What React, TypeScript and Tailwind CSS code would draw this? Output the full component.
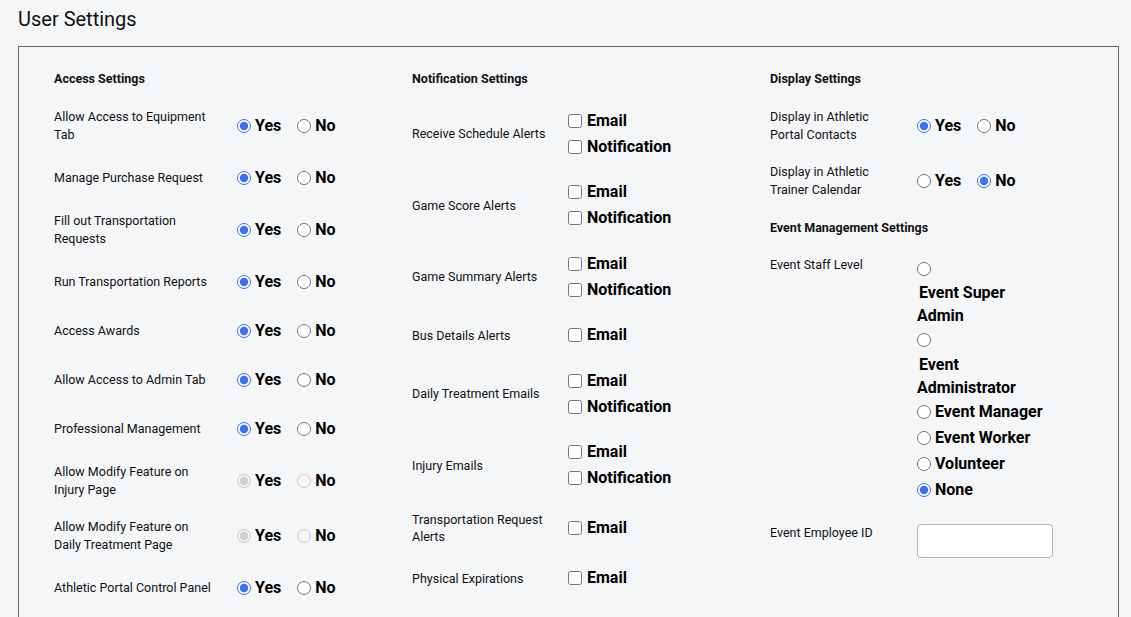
import React from 'react';

type YesNoRow = {
  label: string[];
  value: 'yes' | 'no';
  disabled?: boolean;
};

type AlertRow = {
  label: string[];
  options: string[];
};

const accessRows: YesNoRow[] = [
  { label: ['Allow Access to Equipment', 'Tab'], value: 'yes' },
  { label: ['Manage Purchase Request'], value: 'yes' },
  { label: ['Fill out Transportation', 'Requests'], value: 'yes' },
  { label: ['Run Transportation Reports'], value: 'yes' },
  { label: ['Access Awards'], value: 'yes' },
  { label: ['Allow Access to Admin Tab'], value: 'yes' },
  { label: ['Professional Management'], value: 'yes' },
  { label: ['Allow Modify Feature on', 'Injury Page'], value: 'yes', disabled: true },
  { label: ['Allow Modify Feature on', 'Daily Treatment Page'], value: 'yes', disabled: true },
  { label: ['Athletic Portal Control Panel'], value: 'yes' },
];

const alertRows: AlertRow[] = [
  { label: ['Receive Schedule Alerts'], options: ['Email', 'Notification'] },
  { label: ['Game Score Alerts'], options: ['Email', 'Notification'] },
  { label: ['Game Summary Alerts'], options: ['Email', 'Notification'] },
  { label: ['Bus Details Alerts'], options: ['Email'] },
  { label: ['Daily Treatment Emails'], options: ['Email', 'Notification'] },
  { label: ['Injury Emails'], options: ['Email', 'Notification'] },
  { label: ['Transportation Request', 'Alerts'], options: ['Email'] },
  { label: ['Physical Expirations'], options: ['Email'] },
];

const displayRows: YesNoRow[] = [
  { label: ['Display in Athletic', 'Portal Contacts'], value: 'yes' },
  { label: ['Display in Athletic', 'Trainer Calendar'], value: 'no' },
];

function Label({ lines }: { lines: string[] }) {
  return (
    <div className="text-[12.5px] leading-[17.5px] text-[#111]">
      {lines.map((l) => (
        <span key={l} className="block whitespace-nowrap">
          {l}
        </span>
      ))}
    </div>
  );
}

function SectionTitle({ children, className = '' }: { children: React.ReactNode; className?: string }) {
  return <h3 className={`text-[12.5px] font-bold leading-[17px] text-[#111] ${className}`}>{children}</h3>;
}

function YesNo({ row, name, labelWidth }: { row: YesNoRow; name: string; labelWidth: string }) {
  return (
    <div className="flex items-center py-[10px]">
      <div className={labelWidth}>
        <Label lines={row.label} />
      </div>
      <div className="flex h-[29px] items-center">
        {(['yes', 'no'] as const).map((v) => (
          <label key={v} className="mr-[16px] flex items-center">
            <input
              type="radio"
              name={name}
              defaultChecked={row.value === v}
              disabled={row.disabled}
              className="m-0 size-[14px] accent-[#3b6ff5]"
            />
            <span className="ml-[4px] text-[16px] font-bold leading-[20px]">{v === 'yes' ? 'Yes' : 'No'}</span>
          </label>
        ))}
      </div>
    </div>
  );
}

export default function App() {
  return (
    <div className="min-h-screen bg-[#f5f6f8] font-['Roboto','Liberation_Sans',sans-serif] text-black">
      <h1 className="px-[18px] pt-[6px] text-[20px] font-normal leading-[26px] text-[#111]">User Settings</h1>

      <div className="ml-[18px] mr-[12px] mt-[14px] grid grid-cols-[358px_358px_1fr] border border-[#6b6b6b] pl-[35px] pb-10">
        {/* Access Settings */}
        <div>
          <SectionTitle className="mt-[23px] mb-[11px]">Access Settings</SectionTitle>
          {accessRows.map((r, i) => (
            <YesNo key={i} row={r} name={`access-${i}`} labelWidth="w-[183px]" />
          ))}
        </div>

        {/* Notification Settings */}
        <div>
          <SectionTitle className="mt-[23px] mb-[11px]">Notification Settings</SectionTitle>
          {alertRows.map((r, i) => (
            <div key={i} className="flex items-center py-[9.75px]">
              <div className="w-[156px]">
                <Label lines={r.label} />
              </div>
              <div className="flex min-h-[26px] flex-col justify-center">
                {r.options.map((o) => (
                  <label key={o} className="flex h-[26px] items-center">
                    <input type="checkbox" className="m-0 size-[14px] accent-[#3b6ff5]" />
                    <span className="ml-[5px] text-[16px] font-bold leading-[20px]">{o}</span>
                  </label>
                ))}
              </div>
            </div>
          ))}
        </div>

        {/* Display Settings */}
        <div>
          <SectionTitle className="mt-[23px] mb-[11px]">Display Settings</SectionTitle>
          {displayRows.map((r, i) => (
            <YesNo key={i} row={r} name={`display-${i}`} labelWidth="w-[147px]" />
          ))}

          <SectionTitle className="mt-[11px] mb-[10px]">Event Management Settings</SectionTitle>

          <div className="flex items-start py-[10px]">
            <div className="w-[147px]">
              <Label lines={['Event Staff Level']} />
            </div>
            <div className="text-[16px] font-bold">
              <div className="flex h-[25px] items-center">
                <input type="radio" name="staff" className="m-0 size-[14px] accent-[#3b6ff5]" />
              </div>
              <div className="leading-[23px]">
                <span className="block pl-[2px]">Event Super</span>
                <span className="block">Admin</span>
              </div>
              <div className="flex h-[26px] items-center">
                <input type="radio" name="staff" className="m-0 size-[14px] accent-[#3b6ff5]" />
              </div>
              <div className="leading-[23px]">
                <span className="block pl-[2px]">Event</span>
                <span className="block">Administrator</span>
              </div>
              {['Event Manager', 'Event Worker', 'Volunteer', 'None'].map((o) => (
                <label key={o} className="flex h-[26px] items-center">
                  <input
                    type="radio"
                    name="staff"
                    defaultChecked={o === 'None'}
                    className="m-0 size-[14px] accent-[#3b6ff5]"
                  />
                  <span className="ml-[4px] leading-[20px]">{o}</span>
                </label>
              ))}
            </div>
          </div>

          <div className="flex items-start pt-[11px] pb-[10px]">
            <div className="w-[147px]">
              <Label lines={['Event Employee ID']} />
            </div>
            <input
              type="text"
              className="h-[34px] w-[136px] rounded-[4px] border border-[#b5b5b5] bg-white px-2 text-[14px]"
            />
          </div>
        </div>
      </div>
    </div>
  );
}
